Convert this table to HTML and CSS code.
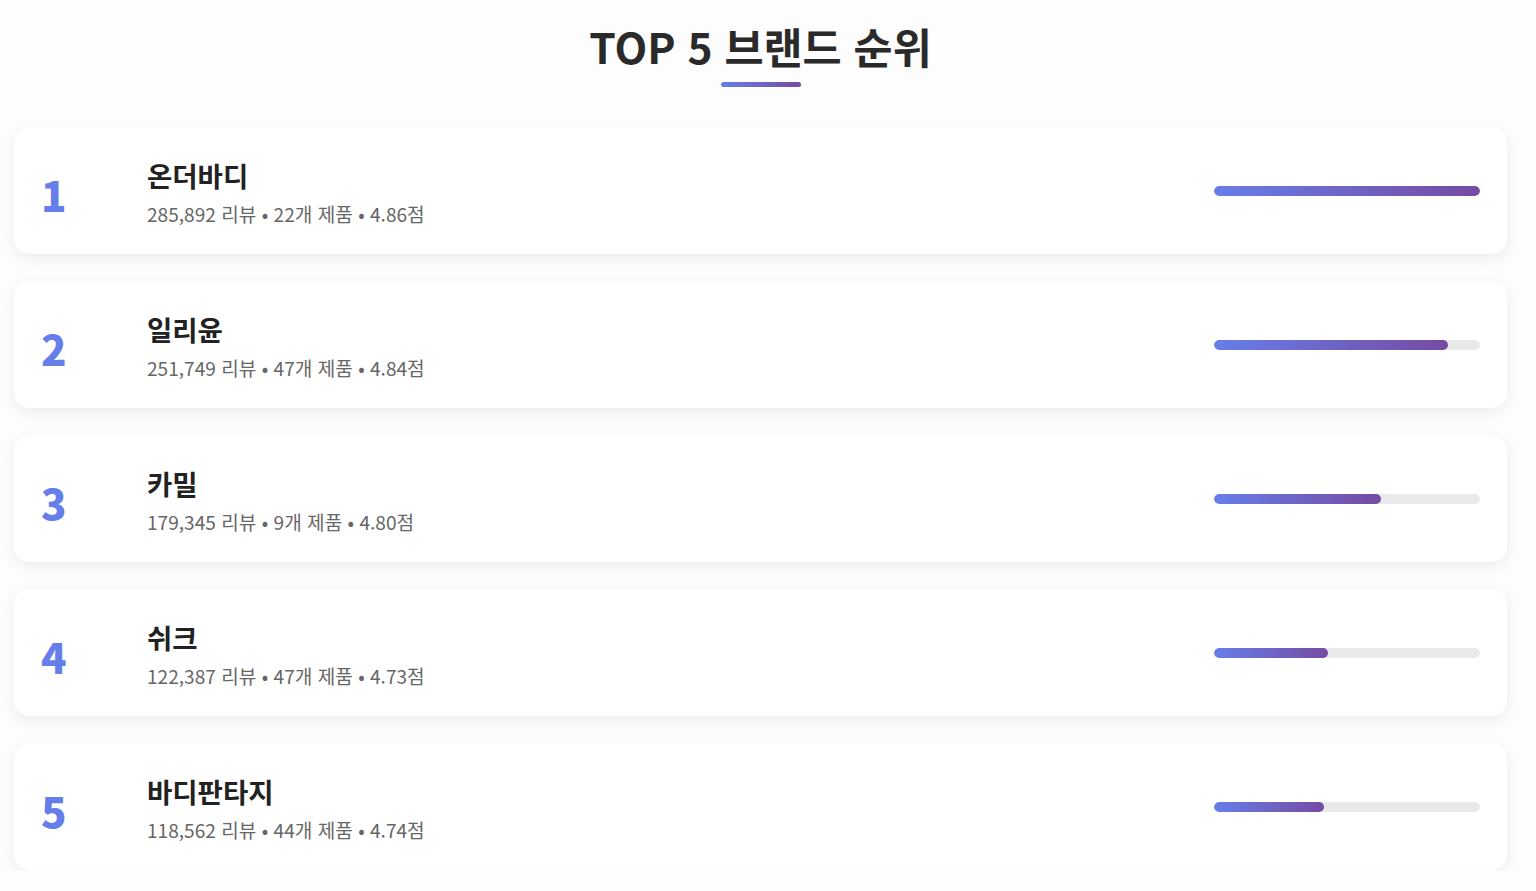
FILE: index.html
```html
<!DOCTYPE html>
<html lang="ko">
<head>
<meta charset="utf-8">
<title>TOP 5 브랜드 순위</title>
<link rel="stylesheet" href="styles.css">
</head>
<body>
<main class="page">
  <header class="heading">
    <h1 class="title">TOP 5 브랜드 순위</h1>
    <div class="title-bar"></div>
  </header>
  <ol class="ranking">
    <li class="card">
      <div class="rank">1</div>
      <div class="info">
        <div class="name">온더바디</div>
        <div class="meta">285,892 리뷰 • 22개 제품 • 4.86점</div>
      </div>
      <div class="track"><div class="fill" style="width:100%"></div></div>
    </li>
    <li class="card">
      <div class="rank">2</div>
      <div class="info">
        <div class="name">일리윤</div>
        <div class="meta">251,749 리뷰 • 47개 제품 • 4.84점</div>
      </div>
      <div class="track"><div class="fill" style="width:88.06%"></div></div>
    </li>
    <li class="card">
      <div class="rank">3</div>
      <div class="info">
        <div class="name">카밀</div>
        <div class="meta">179,345 리뷰 • 9개 제품 • 4.80점</div>
      </div>
      <div class="track"><div class="fill" style="width:62.73%"></div></div>
    </li>
    <li class="card">
      <div class="rank">4</div>
      <div class="info">
        <div class="name">쉬크</div>
        <div class="meta">122,387 리뷰 • 47개 제품 • 4.73점</div>
      </div>
      <div class="track"><div class="fill" style="width:42.81%"></div></div>
    </li>
    <li class="card">
      <div class="rank">5</div>
      <div class="info">
        <div class="name">바디판타지</div>
        <div class="meta">118,562 리뷰 • 44개 제품 • 4.74점</div>
      </div>
      <div class="track"><div class="fill" style="width:41.47%"></div></div>
    </li>
  </ol>
</main>
</body>
</html>
```
FILE: styles.css
```css
* { box-sizing: border-box; }
html, body {
  margin: 0;
  padding: 0;
  background: #fdfdfd;
}
body {
  font-family: "Noto Sans CJK KR", "Noto Sans", sans-serif;
  color: #222;
}
.page {
  margin-right: 15px;
  padding: 14px 14px 0 14px;
}
.heading {
  display: flex;
  flex-direction: column;
  align-items: center;
}
.title {
  margin: 0;
  font-size: 42.5px;
  font-weight: 700;
  line-height: 64px;
  color: #2a2a2a;
}
.title-bar {
  width: 80px;
  height: 5px;
  margin-top: 4px;
  border-radius: 3px;
  background: linear-gradient(90deg, #667eea, #764ba2);
}
.ranking {
  list-style: none;
  margin: 40px 0 0 0;
  padding: 0;
  display: flex;
  flex-direction: column;
  gap: 27px;
}
.card {
  display: flex;
  align-items: center;
  height: 127px;
  padding: 0 27px 0 27px;
  background: #fff;
  border-radius: 15px;
  box-shadow: 0 4px 15px rgba(0, 0, 0, 0.07);
}
.rank {
  width: 106px;
  flex-shrink: 0;
  font-size: 42px;
  font-weight: 900;
  color: #667eea;
  line-height: 1;
  padding-top: 6px;
}
.info {
  flex: 1;
  display: flex;
  flex-direction: column;
  gap: 8px;
  padding-top: 2px;
}
.name {
  font-size: 27.5px;
  font-weight: 700;
  line-height: 36px;
  color: #222;
}
.meta {
  font-size: 19.1px;
  line-height: 26px;
  font-weight: 400;
  color: #666;
}
.track {
  width: 266px;
  height: 10px;
  border-radius: 5px;
  background: #e9e9ec;
  overflow: hidden;
}
.fill {
  height: 100%;
  border-radius: 5px;
  background: linear-gradient(90deg, #667eea, #764ba2);
}
```
